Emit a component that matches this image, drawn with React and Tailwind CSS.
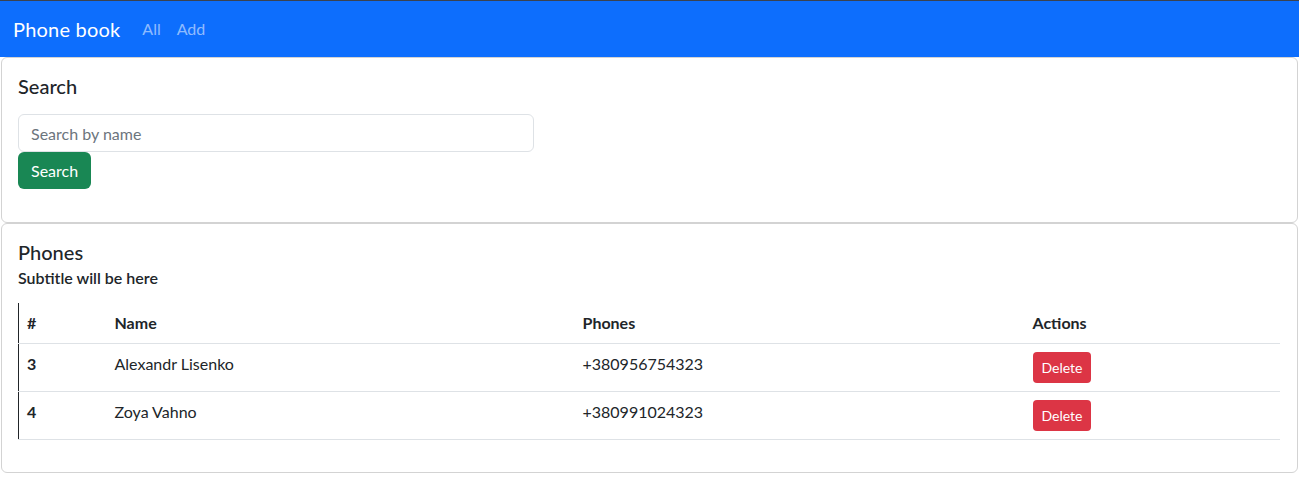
import React from "react";

const rows = [
  { id: 3, name: "Alexandr Lisenko", phone: "+380956754323" },
  { id: 4, name: "Zoya Vahno", phone: "+380991024323" },
];

export default function App() {
  return (
    <div
      className="min-h-[478px] bg-white text-[#212529] text-base"
      style={{ fontFamily: '"Lato", "Noto Sans", sans-serif' }}
    >
      <div className="h-px bg-[#3a4250]" />
      <nav className="flex h-[56px] items-center bg-[#0d6efd] px-[13px]">
        <span className="mr-[22px] text-[20px] leading-[30px] tracking-[0.2px] text-white">Phone book</span>
        <div className="flex gap-[16px] text-[rgba(255,255,255,0.55)]">
          <span>All</span>
          <span>Add</span>
        </div>
      </nav>

      <div className="mx-px">
        <div className="rounded-[6px] border border-[#d3d3d3] p-4 pb-[33px]">
          <h5 className="mb-2 text-[20px] font-medium leading-[24px]">Search</h5>
          <div className="mt-[16px] w-[516px]">
            <input
              className="block h-[38px] w-full rounded-[6px] border border-[#dee2e6] px-3 text-base text-[#212529] outline-none placeholder:text-[#6c757d]"
              placeholder="Search by name"
            />
            <button className="h-[37px] rounded-[6px] bg-[#198754] px-[13px] text-base text-white">
              Search
            </button>
          </div>
        </div>

        <div className="rounded-[6px] border border-[#d3d3d3] px-4 pb-[32px] pt-4">
          <h5 className="mb-2 text-[20px] font-medium leading-[24px]">Phones</h5>
          <h6 className="-mt-1 text-base font-semibold leading-[19px]">Subtitle will be here</h6>
          <table className="mt-[16px] w-[1262px] border-l border-[#212529] border-collapse">
            <colgroup>
              <col className="w-[88px]" />
              <col className="w-[468px]" />
              <col className="w-[450px]" />
              <col />
            </colgroup>
            <thead>
              <tr className="border-b border-[#dee2e6]">
                <th className="p-2 text-left align-top font-bold leading-[24px]">#</th>
                <th className="p-2 text-left align-top font-bold leading-[24px]">Name</th>
                <th className="p-2 text-left align-top font-bold leading-[24px]">Phones</th>
                <th className="p-2 text-left align-top font-bold leading-[24px]">Actions</th>
              </tr>
            </thead>
            <tbody>
              {rows.map((r) => (
                <tr key={r.id} className="border-b border-[#dee2e6]">
                  <td className="p-2 align-top font-bold leading-[24px]">{r.id}</td>
                  <td className="p-2 align-top leading-[24px]">{r.name}</td>
                  <td className="p-2 align-top leading-[24px]">{r.phone}</td>
                  <td className="p-2 align-top leading-[24px]">
                    <button className="h-[31px] rounded-[4px] bg-[#dc3545] px-[9px] text-sm text-white">
                      Delete
                    </button>
                  </td>
                </tr>
              ))}
            </tbody>
          </table>
        </div>
      </div>
    </div>
  );
}
